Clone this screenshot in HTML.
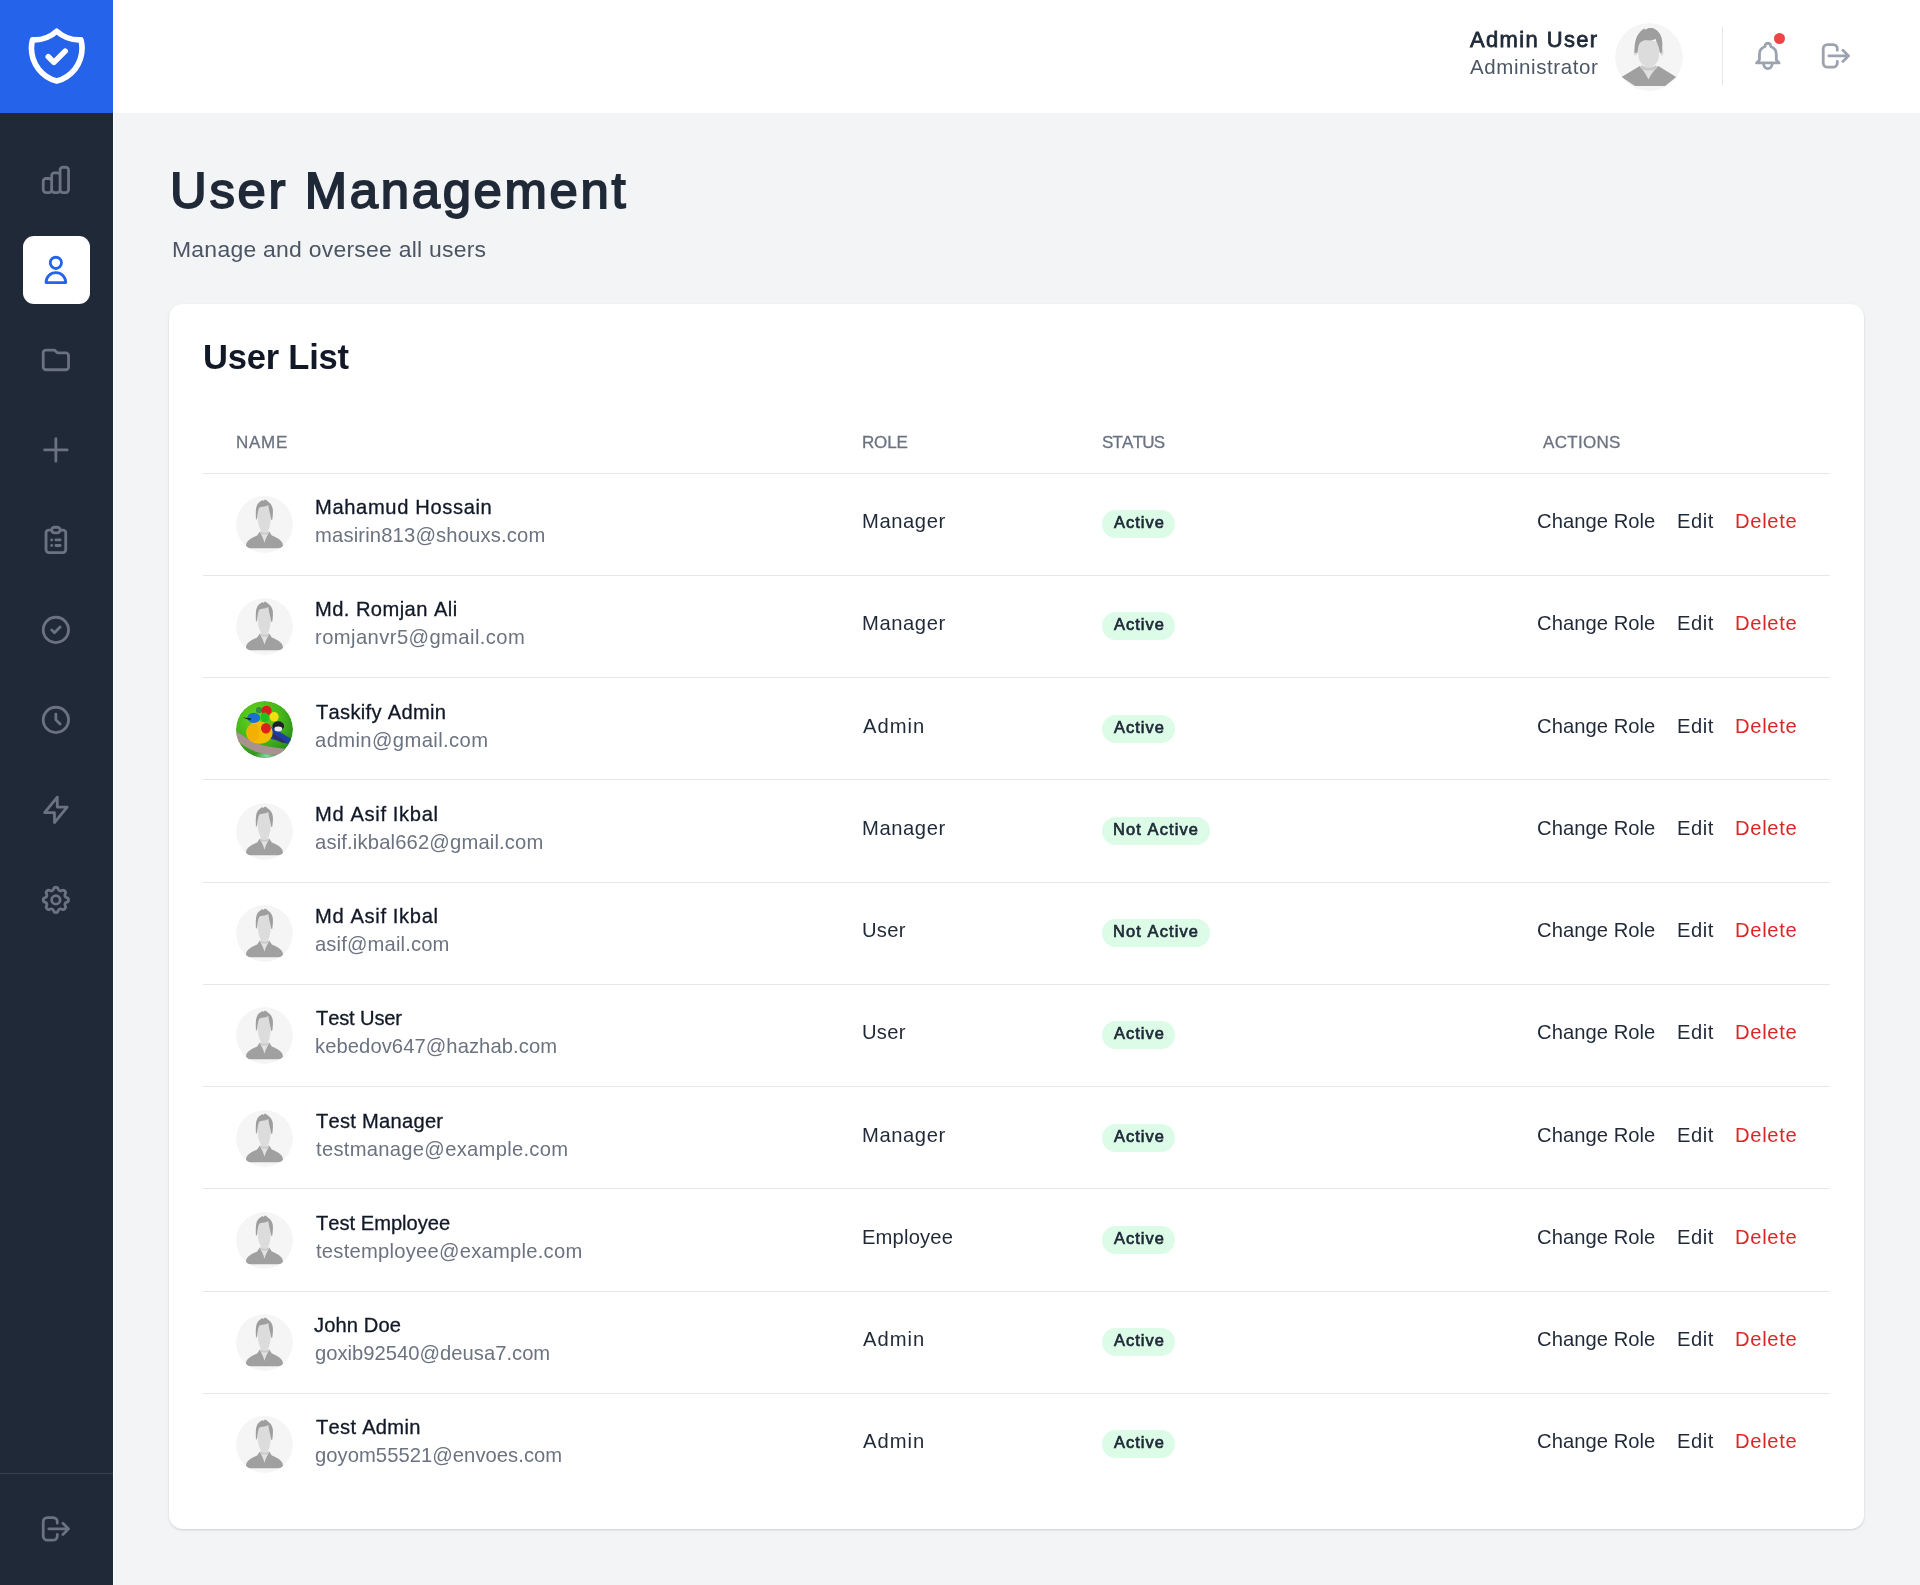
<!DOCTYPE html>
<html><head><meta charset="utf-8"><title>User Management</title>
<style>
*{box-sizing:border-box;margin:0;padding:0}
html,body{width:1920px;height:1585px;overflow:hidden;background:#f3f4f6;font-family:"Liberation Sans",sans-serif;font-kerning:none}
.abs{position:absolute}
#side{position:absolute;left:0;top:0;width:113px;height:1585px;background:#1f2937}
#logo{position:absolute;left:0;top:0;width:113px;height:113px;background:#2563eb}
#vline{position:absolute;left:113px;top:0;width:1px;height:1585px;background:#fff}
#hdr{position:absolute;left:114px;top:0;width:1806px;height:113px;background:#fff}
.ico{position:absolute;fill:none;stroke-linecap:round;stroke-linejoin:round;overflow:visible}
#active{position:absolute;left:23px;top:236px;width:67px;height:68px;background:#fff;border-radius:11px}
#sep{position:absolute;left:0;top:1473px;width:113px;height:1px;background:#374151}
#card{position:absolute;left:169px;top:304px;width:1695px;height:1225px;background:#fff;border-radius:13.5px;box-shadow:0 1px 3px rgba(0,0,0,.1),0 1px 2px rgba(0,0,0,.06)}
.t{position:absolute;white-space:pre;font-feature-settings:"kern" 0;will-change:transform}
.av{position:absolute;border-radius:50%;overflow:hidden}
</style></head><body>
<div id="side"></div><div id="logo"></div><div id="vline"></div><div id="hdr"></div>
<svg class="ico" style="left:22.95px;top:22.90px;width:67.50px;height:67.50px" viewBox="0 0 24 24" stroke="#fff" stroke-width="2"><path d="M9 12l2 2 4-4m5.618-4.016A11.955 11.955 0 0112 2.944a11.955 11.955 0 01-8.618 3.04A12.02 12.02 0 003 9c0 5.591 3.824 10.29 9 11.622 5.176-1.332 9-6.03 9-11.622 0-1.042-.133-2.052-.382-3.016z"/></svg>
<div id="active"></div>
<svg class="ico" style="left:39.12px;top:163.12px;width:33.75px;height:33.75px" viewBox="0 0 24 24" stroke="#6b7280" stroke-width="2"><path d="M9 19v-6a2 2 0 00-2-2H5a2 2 0 00-2 2v6a2 2 0 002 2h2a2 2 0 002-2zm0 0V9a2 2 0 012-2h2a2 2 0 012 2v10m-6 0a2 2 0 002 2h2a2 2 0 002-2m0 0V5a2 2 0 012-2h2a2 2 0 012 2v14a2 2 0 01-2 2h-2a2 2 0 01-2-2z"/></svg>
<svg class="ico" style="left:39.12px;top:253.12px;width:33.75px;height:33.75px" viewBox="0 0 24 24" stroke="#2563eb" stroke-width="2"><path d="M16 7a4 4 0 11-8 0 4 4 0 018 0zM12 14a7 7 0 00-7 7h14a7 7 0 00-7-7z"/></svg>
<svg class="ico" style="left:39.12px;top:343.12px;width:33.75px;height:33.75px" viewBox="0 0 24 24" stroke="#6b7280" stroke-width="2"><path d="M3 7v10a2 2 0 002 2h14a2 2 0 002-2V9a2 2 0 00-2-2h-6l-2-2H5a2 2 0 00-2 2z"/></svg>
<svg class="ico" style="left:39.12px;top:433.12px;width:33.75px;height:33.75px" viewBox="0 0 24 24" stroke="#6b7280" stroke-width="2"><path d="M12 4v16m8-8H4"/></svg>
<svg class="ico" style="left:39.12px;top:523.12px;width:33.75px;height:33.75px" viewBox="0 0 24 24" stroke="#6b7280" stroke-width="2"><path d="M9 5H7a2 2 0 00-2 2v12a2 2 0 002 2h10a2 2 0 002-2V7a2 2 0 00-2-2h-2M9 5a2 2 0 002 2h2a2 2 0 002-2M9 5a2 2 0 012-2h2a2 2 0 012 2m-3 7h3m-3 4h3m-6-4h.01M9 16h.01"/></svg>
<svg class="ico" style="left:39.12px;top:613.12px;width:33.75px;height:33.75px" viewBox="0 0 24 24" stroke="#6b7280" stroke-width="2"><path d="M9 12l2 2 4-4m6 2a9 9 0 11-18 0 9 9 0 0118 0z"/></svg>
<svg class="ico" style="left:39.12px;top:703.12px;width:33.75px;height:33.75px" viewBox="0 0 24 24" stroke="#6b7280" stroke-width="2"><path d="M12 8v4l3 3m6-3a9 9 0 11-18 0 9 9 0 0118 0z"/></svg>
<svg class="ico" style="left:39.12px;top:793.12px;width:33.75px;height:33.75px" viewBox="0 0 24 24" stroke="#6b7280" stroke-width="2"><path d="M13 10V3L4 14h7v7l9-11h-7z"/></svg>
<svg class="ico" style="left:39.12px;top:883.12px;width:33.75px;height:33.75px" viewBox="0 0 24 24" stroke="#6b7280" stroke-width="2"><path d="M10.325 4.317c.426-1.756 2.924-1.756 3.35 0a1.724 1.724 0 002.573 1.066c1.543-.94 3.31.826 2.37 2.37a1.724 1.724 0 001.065 2.572c1.756.426 1.756 2.924 0 3.35a1.724 1.724 0 00-1.066 2.573c.94 1.543-.826 3.31-2.37 2.37a1.724 1.724 0 00-2.572 1.065c-.426 1.756-2.924 1.756-3.35 0a1.724 1.724 0 00-2.573-1.066c-1.543.94-3.31-.826-2.37-2.37a1.724 1.724 0 00-1.065-2.572c-1.756-.426-1.756-2.924 0-3.35a1.724 1.724 0 001.066-2.573c-.94-1.543.826-3.31 2.37-2.37.996.608 2.296.07 2.572-1.065zM15 12a3 3 0 11-6 0 3 3 0 016 0z"/></svg>
<div id="sep"></div>
<svg class="ico" style="left:39.12px;top:1512.12px;width:33.75px;height:33.75px" viewBox="0 0 24 24" stroke="#6b7280" stroke-width="2"><path d="M17 16l4-4m0 0l-4-4m4 4H7m6 4v1a3 3 0 01-3 3H6a3 3 0 01-3-3V7a3 3 0 013-3h4a3 3 0 013 3v1"/></svg>
<div class="t" style="left:1470.26px;top:29.00px;font-size:21.948px;line-height:21.948px;letter-spacing:1.395px;color:#1f2937;-webkit-text-stroke:0.8px #1f2937;">Admin User</div>
<div class="t" style="left:1469.96px;top:57.00px;font-size:20.495px;line-height:20.495px;letter-spacing:0.596px;color:#4b5563;">Administrator</div>
<div class="av" style="left:1615px;top:22.5px;width:68px;height:68px"><svg width="100%" height="100%" viewBox="0 0 56 56"><circle cx="28" cy="28" r="28" fill="#f5f5f5"/><path d="M5.4 44.4 L20.4 35.4 L35.6 35.4 L50.4 44.4 L41.3 51.8 L16.4 51.8 Z" fill="#a0a0a0"/><path d="M20.4 35.4 C23 39 25.5 42 27.6 46.6 C29.5 42 32.5 39 35.6 35.4 Z" fill="#e0e0e0"/><ellipse cx="16.9" cy="23.8" rx="1.4" ry="2.9" fill="#dadada"/><ellipse cx="38.5" cy="23.8" rx="1.4" ry="2.9" fill="#dadada"/><path d="M18.7 20 C18.7 12 36.6 12 36.6 20 L36.2 28 C35.4 33.5 31.2 36.2 27.7 36.2 C24.2 36.2 20.2 33.5 19.4 28 Z" fill="#dcdcdc"/><path d="M22 34.5 C24.5 37.5 31 37.5 33.5 34.5 L35 36.8 C31 40 24.5 40 20.6 36.8 Z" fill="#c9c9c9"/><path d="M16.2 24.5 C15.6 16 17.5 9.5 22.5 5.6 L24.3 4.6 L24.9 5.6 L27.6 4.1 L31 4.1 C36 6.2 39.2 10 39 18 L38.6 24.6 L36.9 24.6 C36.6 20.5 35.2 17.5 34.3 15.8 C33.8 14.6 33.6 13.8 33.4 13 C31.5 14.4 29 14.5 26.5 14.2 C22.5 14 20 15.8 19.2 19.5 C18.8 21.2 18.7 23 18.6 24.6 Z" fill="#9e9e9e"/></svg></div>
<div class="abs" style="left:1722px;top:27px;width:1px;height:58px;background:#e5e7eb"></div>
<svg class="ico" style="left:1751.12px;top:39.33px;width:33.75px;height:33.75px" viewBox="0 0 24 24" stroke="#9ca3af" stroke-width="2"><path d="M15 17h5l-1.405-1.405A2.032 2.032 0 0118 14.158V11a6.002 6.002 0 00-4-5.659V5a2 2 0 10-4 0v.341C7.67 6.165 6 8.388 6 11v3.159c0 .538-.214 1.055-.595 1.436L4 17h5m6 0v1a3 3 0 11-6 0v-1m6 0H9"/></svg>
<div class="abs" style="left:1774px;top:33px;width:11px;height:11px;border-radius:50%;background:#ef4444"></div>
<svg class="ico" style="left:1819.12px;top:38.92px;width:33.75px;height:33.75px" viewBox="0 0 24 24" stroke="#9ca3af" stroke-width="2"><path d="M17 16l4-4m0 0l-4-4m4 4H7m6 4v1a3 3 0 01-3 3H6a3 3 0 01-3-3V7a3 3 0 013-3h4a3 3 0 013 3v1"/></svg>
<div class="t" style="left:169.78px;top:166.00px;font-size:50.873px;line-height:50.873px;letter-spacing:2.658px;color:#1f2937;-webkit-text-stroke:1.8px #1f2937;">User Management</div>
<div class="t" style="left:171.62px;top:238.00px;font-size:22.966px;line-height:22.966px;letter-spacing:0.242px;color:#4b5563;">Manage and oversee all users</div>
<div id="card"></div>
<div class="t" style="left:203.13px;top:340.00px;font-size:34.521px;line-height:34.521px;letter-spacing:-0.204px;font-weight:700;color:#111827;">User List</div>
<div class="t" style="left:236.30px;top:434.00px;font-size:17.006px;line-height:17.006px;letter-spacing:0.731px;color:#6b7280;-webkit-text-stroke:0.3px currentColor;">NAME</div>
<div class="t" style="left:862.00px;top:434.00px;font-size:17.006px;line-height:17.006px;letter-spacing:-0.161px;color:#6b7280;-webkit-text-stroke:0.3px currentColor;">ROLE</div>
<div class="t" style="left:1101.93px;top:434.00px;font-size:17.006px;line-height:17.006px;letter-spacing:-0.807px;color:#6b7280;-webkit-text-stroke:0.3px currentColor;">STATUS</div>
<div class="t" style="left:1543.17px;top:434.00px;font-size:17.006px;line-height:17.006px;letter-spacing:0.304px;color:#6b7280;-webkit-text-stroke:0.3px currentColor;">ACTIONS</div>
<div class="av" style="left:236px;top:496.00px;width:57px;height:57px"><svg width="100%" height="100%" viewBox="0 0 56 56"><circle cx="28" cy="28" r="28" fill="#f5f5f5"/><path d="M9.9 49.3 C9.4 45 13.5 41.8 20.8 38.9 L23.2 35.2 L32.8 35.2 L35.2 38.9 C42.5 41.8 46.6 45 46.1 49.3 Q45 51.4 41.5 51.4 L14.5 51.4 Q11 51.4 9.9 49.3 Z" fill="#a0a0a0"/><path d="M23.2 35.2 C25 38.5 26.8 41.5 28 46 C29.2 41.5 31 38.5 32.8 35.2 Z" fill="#e2e2e2"/><path d="M21.4 13 C21.4 7.5 34.2 7.5 34.2 13 L34.1 23.4 C33.6 28.5 32.8 31.5 32.3 32.5 C31 35 29.5 36.3 27.9 36.3 C26 36.3 24.8 35 23.9 32.8 C22.6 30 21.8 27 21.4 23.9 Z" fill="#dcdcdc"/><path d="M24 35.2 C25.5 36.6 30.5 36.6 32 35.2 L32.6 36.6 C30 38.2 26 38.2 23.4 36.6 Z" fill="#c8c8c8"/><path d="M19.65 23.9 C19.3 18 19.4 14 19.9 11.4 C20.6 8.5 22 6.5 23.9 5.5 L25.9 4.0 L26.9 5.0 L28.4 3.5 C29.5 3.8 30.4 4.5 31.3 5.5 C33 6.8 34.5 8.2 35.3 9.95 C36 11.5 36.3 13 36.3 14.9 C36.3 18 36 21 35.6 23.4 L34.6 23.4 C34 20 33.4 17 32.8 14.9 C32.4 13 32 11 31.8 9.0 C30.8 9.5 29.9 9.8 28.9 9.95 C27 10.2 25 10.4 23.9 10.9 C22.9 11.6 22.2 12.6 21.9 13.9 C21.3 16.5 21 19 20.9 21.4 Z" fill="#9e9e9e"/></svg></div>
<div class="t" style="left:314.65px;top:497.00px;font-size:20.131px;line-height:20.131px;letter-spacing:0.644px;color:#111827;-webkit-text-stroke:0.3px currentColor;">Mahamud Hossain</div>
<div class="t" style="left:314.66px;top:525.00px;font-size:20.204px;line-height:20.204px;letter-spacing:0.167px;color:#6b7280;">masirin813@shouxs.com</div>
<div class="t" style="left:862.44px;top:511.00px;font-size:20.204px;line-height:20.204px;letter-spacing:0.592px;color:#1f2937;">Manager</div>
<div class="abs" style="left:1102px;top:510.00px;width:73.1px;height:28px;border-radius:14px;background:#dcfce7"></div>
<div class="t" style="left:1113.52px;top:514.00px;font-size:16.425px;line-height:16.425px;letter-spacing:1.027px;color:#1f2937;-webkit-text-stroke:0.7px #1f2937;">Active</div>
<div class="t" style="left:1536.97px;top:511.00px;font-size:20.204px;line-height:20.204px;letter-spacing:0.049px;color:#1f2937;">Change Role</div>
<div class="t" style="left:1676.54px;top:511.00px;font-size:20.204px;line-height:20.204px;letter-spacing:0.564px;color:#1f2937;">Edit</div>
<div class="t" style="left:1734.54px;top:511.00px;font-size:20.204px;line-height:20.204px;letter-spacing:0.671px;color:#dc2626;">Delete</div>
<div class="abs" style="left:203px;top:575px;width:1627px;height:1px;background:#e5e7eb"></div>
<div class="av" style="left:236px;top:598.00px;width:57px;height:57px"><svg width="100%" height="100%" viewBox="0 0 56 56"><circle cx="28" cy="28" r="28" fill="#f5f5f5"/><path d="M9.9 49.3 C9.4 45 13.5 41.8 20.8 38.9 L23.2 35.2 L32.8 35.2 L35.2 38.9 C42.5 41.8 46.6 45 46.1 49.3 Q45 51.4 41.5 51.4 L14.5 51.4 Q11 51.4 9.9 49.3 Z" fill="#a0a0a0"/><path d="M23.2 35.2 C25 38.5 26.8 41.5 28 46 C29.2 41.5 31 38.5 32.8 35.2 Z" fill="#e2e2e2"/><path d="M21.4 13 C21.4 7.5 34.2 7.5 34.2 13 L34.1 23.4 C33.6 28.5 32.8 31.5 32.3 32.5 C31 35 29.5 36.3 27.9 36.3 C26 36.3 24.8 35 23.9 32.8 C22.6 30 21.8 27 21.4 23.9 Z" fill="#dcdcdc"/><path d="M24 35.2 C25.5 36.6 30.5 36.6 32 35.2 L32.6 36.6 C30 38.2 26 38.2 23.4 36.6 Z" fill="#c8c8c8"/><path d="M19.65 23.9 C19.3 18 19.4 14 19.9 11.4 C20.6 8.5 22 6.5 23.9 5.5 L25.9 4.0 L26.9 5.0 L28.4 3.5 C29.5 3.8 30.4 4.5 31.3 5.5 C33 6.8 34.5 8.2 35.3 9.95 C36 11.5 36.3 13 36.3 14.9 C36.3 18 36 21 35.6 23.4 L34.6 23.4 C34 20 33.4 17 32.8 14.9 C32.4 13 32 11 31.8 9.0 C30.8 9.5 29.9 9.8 28.9 9.95 C27 10.2 25 10.4 23.9 10.9 C22.9 11.6 22.2 12.6 21.9 13.9 C21.3 16.5 21 19 20.9 21.4 Z" fill="#9e9e9e"/></svg></div>
<div class="t" style="left:314.65px;top:599.00px;font-size:20.131px;line-height:20.131px;letter-spacing:0.440px;color:#111827;-webkit-text-stroke:0.3px currentColor;">Md. Romjan Ali</div>
<div class="t" style="left:314.66px;top:627.00px;font-size:20.204px;line-height:20.204px;letter-spacing:0.421px;color:#6b7280;">romjanvr5@gmail.com</div>
<div class="t" style="left:862.44px;top:613.00px;font-size:20.204px;line-height:20.204px;letter-spacing:0.592px;color:#1f2937;">Manager</div>
<div class="abs" style="left:1102px;top:612.00px;width:73.1px;height:28px;border-radius:14px;background:#dcfce7"></div>
<div class="t" style="left:1113.52px;top:616.00px;font-size:16.425px;line-height:16.425px;letter-spacing:1.027px;color:#1f2937;-webkit-text-stroke:0.7px #1f2937;">Active</div>
<div class="t" style="left:1536.97px;top:613.00px;font-size:20.204px;line-height:20.204px;letter-spacing:0.049px;color:#1f2937;">Change Role</div>
<div class="t" style="left:1676.54px;top:613.00px;font-size:20.204px;line-height:20.204px;letter-spacing:0.564px;color:#1f2937;">Edit</div>
<div class="t" style="left:1734.54px;top:613.00px;font-size:20.204px;line-height:20.204px;letter-spacing:0.671px;color:#dc2626;">Delete</div>
<div class="abs" style="left:203px;top:677px;width:1627px;height:1px;background:#e5e7eb"></div>
<div class="av" style="left:236px;top:701.00px;width:57px;height:57px"><svg width="100%" height="100%" viewBox="0 0 56 56"><defs><radialGradient id="bg" cx="0.38" cy="0.3" r="0.8"><stop offset="0" stop-color="#66d81c"/><stop offset="0.55" stop-color="#44b41a"/><stop offset="1" stop-color="#23801e"/></radialGradient><radialGradient id="bg2" cx="0.5" cy="0.5" r="0.5"><stop offset="0" stop-color="#8fdcb0"/><stop offset="1" stop-color="#8fdcb0" stop-opacity="0"/></radialGradient></defs><circle cx="28" cy="28" r="28" fill="url(#bg)"/><ellipse cx="30" cy="54" rx="12" ry="5" fill="url(#bg2)"/><path d="M0 30 C6 33 13 39 21 42 C30 45 40 46 48 47 L46 52 C38 54 28 52 20 50 C12 47 5 42 0 39 Z" fill="#a8928f"/><path d="M25 21 C34 24 44 31 54 37 L51 42 C43 40 35 37 27 35 Z" fill="#1e3ea6"/><path d="M32 30 C38 33 44 36 50 41 L45 41 C40 38 36 35 31 33 Z" fill="#3a2a2a" opacity="0.6"/><ellipse cx="23" cy="31" rx="13" ry="11" fill="#f4bd00"/><ellipse cx="17" cy="31" rx="6" ry="9" fill="#f0a800" opacity="0.6"/><ellipse cx="17.5" cy="16.5" rx="6.3" ry="5" fill="#1a6fd8"/><path d="M6.5 16.2 L15 17 L14 19 Z" fill="#1a1a1a"/><circle cx="22.5" cy="9" r="3" fill="#2f8f3a"/><ellipse cx="30" cy="9.5" rx="5" ry="4.8" fill="#d8211e"/><ellipse cx="28.2" cy="16.2" rx="4.2" ry="5" fill="#22c21e"/><ellipse cx="37.5" cy="15.5" rx="4.5" ry="4.7" fill="#f2e010"/><ellipse cx="29.4" cy="26.8" rx="4.8" ry="5.2" fill="#dc201e"/><ellipse cx="41.5" cy="24.5" rx="5.8" ry="4.6" fill="#20202c"/><ellipse cx="41.5" cy="27.5" rx="3.8" ry="2.4" fill="#ececec"/></svg></div>
<div class="t" style="left:315.85px;top:702.00px;font-size:20.131px;line-height:20.131px;letter-spacing:0.296px;color:#111827;-webkit-text-stroke:0.3px currentColor;">Taskify Admin</div>
<div class="t" style="left:315.14px;top:730.00px;font-size:20.204px;line-height:20.204px;letter-spacing:0.399px;color:#6b7280;">admin@gmail.com</div>
<div class="t" style="left:862.56px;top:716.00px;font-size:20.204px;line-height:20.204px;letter-spacing:0.971px;color:#1f2937;">Admin</div>
<div class="abs" style="left:1102px;top:715.00px;width:73.1px;height:28px;border-radius:14px;background:#dcfce7"></div>
<div class="t" style="left:1113.52px;top:719.00px;font-size:16.425px;line-height:16.425px;letter-spacing:1.027px;color:#1f2937;-webkit-text-stroke:0.7px #1f2937;">Active</div>
<div class="t" style="left:1536.97px;top:716.00px;font-size:20.204px;line-height:20.204px;letter-spacing:0.049px;color:#1f2937;">Change Role</div>
<div class="t" style="left:1676.54px;top:716.00px;font-size:20.204px;line-height:20.204px;letter-spacing:0.564px;color:#1f2937;">Edit</div>
<div class="t" style="left:1734.54px;top:716.00px;font-size:20.204px;line-height:20.204px;letter-spacing:0.671px;color:#dc2626;">Delete</div>
<div class="abs" style="left:203px;top:779px;width:1627px;height:1px;background:#e5e7eb"></div>
<div class="av" style="left:236px;top:803.00px;width:57px;height:57px"><svg width="100%" height="100%" viewBox="0 0 56 56"><circle cx="28" cy="28" r="28" fill="#f5f5f5"/><path d="M9.9 49.3 C9.4 45 13.5 41.8 20.8 38.9 L23.2 35.2 L32.8 35.2 L35.2 38.9 C42.5 41.8 46.6 45 46.1 49.3 Q45 51.4 41.5 51.4 L14.5 51.4 Q11 51.4 9.9 49.3 Z" fill="#a0a0a0"/><path d="M23.2 35.2 C25 38.5 26.8 41.5 28 46 C29.2 41.5 31 38.5 32.8 35.2 Z" fill="#e2e2e2"/><path d="M21.4 13 C21.4 7.5 34.2 7.5 34.2 13 L34.1 23.4 C33.6 28.5 32.8 31.5 32.3 32.5 C31 35 29.5 36.3 27.9 36.3 C26 36.3 24.8 35 23.9 32.8 C22.6 30 21.8 27 21.4 23.9 Z" fill="#dcdcdc"/><path d="M24 35.2 C25.5 36.6 30.5 36.6 32 35.2 L32.6 36.6 C30 38.2 26 38.2 23.4 36.6 Z" fill="#c8c8c8"/><path d="M19.65 23.9 C19.3 18 19.4 14 19.9 11.4 C20.6 8.5 22 6.5 23.9 5.5 L25.9 4.0 L26.9 5.0 L28.4 3.5 C29.5 3.8 30.4 4.5 31.3 5.5 C33 6.8 34.5 8.2 35.3 9.95 C36 11.5 36.3 13 36.3 14.9 C36.3 18 36 21 35.6 23.4 L34.6 23.4 C34 20 33.4 17 32.8 14.9 C32.4 13 32 11 31.8 9.0 C30.8 9.5 29.9 9.8 28.9 9.95 C27 10.2 25 10.4 23.9 10.9 C22.9 11.6 22.2 12.6 21.9 13.9 C21.3 16.5 21 19 20.9 21.4 Z" fill="#9e9e9e"/></svg></div>
<div class="t" style="left:314.65px;top:804.00px;font-size:20.131px;line-height:20.131px;letter-spacing:0.647px;color:#111827;-webkit-text-stroke:0.3px currentColor;">Md Asif Ikbal</div>
<div class="t" style="left:315.14px;top:832.00px;font-size:20.204px;line-height:20.204px;letter-spacing:0.164px;color:#6b7280;">asif.ikbal662@gmail.com</div>
<div class="t" style="left:862.44px;top:818.00px;font-size:20.204px;line-height:20.204px;letter-spacing:0.592px;color:#1f2937;">Manager</div>
<div class="abs" style="left:1102px;top:817.00px;width:108.0px;height:28px;border-radius:14px;background:#dcfce7"></div>
<div class="t" style="left:1113.40px;top:821.00px;font-size:16.425px;line-height:16.425px;letter-spacing:1.125px;color:#1f2937;-webkit-text-stroke:0.7px #1f2937;">Not Active</div>
<div class="t" style="left:1536.97px;top:818.00px;font-size:20.204px;line-height:20.204px;letter-spacing:0.049px;color:#1f2937;">Change Role</div>
<div class="t" style="left:1676.54px;top:818.00px;font-size:20.204px;line-height:20.204px;letter-spacing:0.564px;color:#1f2937;">Edit</div>
<div class="t" style="left:1734.54px;top:818.00px;font-size:20.204px;line-height:20.204px;letter-spacing:0.671px;color:#dc2626;">Delete</div>
<div class="abs" style="left:203px;top:882px;width:1627px;height:1px;background:#e5e7eb"></div>
<div class="av" style="left:236px;top:905.00px;width:57px;height:57px"><svg width="100%" height="100%" viewBox="0 0 56 56"><circle cx="28" cy="28" r="28" fill="#f5f5f5"/><path d="M9.9 49.3 C9.4 45 13.5 41.8 20.8 38.9 L23.2 35.2 L32.8 35.2 L35.2 38.9 C42.5 41.8 46.6 45 46.1 49.3 Q45 51.4 41.5 51.4 L14.5 51.4 Q11 51.4 9.9 49.3 Z" fill="#a0a0a0"/><path d="M23.2 35.2 C25 38.5 26.8 41.5 28 46 C29.2 41.5 31 38.5 32.8 35.2 Z" fill="#e2e2e2"/><path d="M21.4 13 C21.4 7.5 34.2 7.5 34.2 13 L34.1 23.4 C33.6 28.5 32.8 31.5 32.3 32.5 C31 35 29.5 36.3 27.9 36.3 C26 36.3 24.8 35 23.9 32.8 C22.6 30 21.8 27 21.4 23.9 Z" fill="#dcdcdc"/><path d="M24 35.2 C25.5 36.6 30.5 36.6 32 35.2 L32.6 36.6 C30 38.2 26 38.2 23.4 36.6 Z" fill="#c8c8c8"/><path d="M19.65 23.9 C19.3 18 19.4 14 19.9 11.4 C20.6 8.5 22 6.5 23.9 5.5 L25.9 4.0 L26.9 5.0 L28.4 3.5 C29.5 3.8 30.4 4.5 31.3 5.5 C33 6.8 34.5 8.2 35.3 9.95 C36 11.5 36.3 13 36.3 14.9 C36.3 18 36 21 35.6 23.4 L34.6 23.4 C34 20 33.4 17 32.8 14.9 C32.4 13 32 11 31.8 9.0 C30.8 9.5 29.9 9.8 28.9 9.95 C27 10.2 25 10.4 23.9 10.9 C22.9 11.6 22.2 12.6 21.9 13.9 C21.3 16.5 21 19 20.9 21.4 Z" fill="#9e9e9e"/></svg></div>
<div class="t" style="left:314.65px;top:906.00px;font-size:20.131px;line-height:20.131px;letter-spacing:0.647px;color:#111827;-webkit-text-stroke:0.3px currentColor;">Md Asif Ikbal</div>
<div class="t" style="left:315.14px;top:934.00px;font-size:20.204px;line-height:20.204px;letter-spacing:0.143px;color:#6b7280;">asif@mail.com</div>
<div class="t" style="left:862.44px;top:920.00px;font-size:20.204px;line-height:20.204px;letter-spacing:0.246px;color:#1f2937;">User</div>
<div class="abs" style="left:1102px;top:919.00px;width:108.0px;height:28px;border-radius:14px;background:#dcfce7"></div>
<div class="t" style="left:1113.40px;top:923.00px;font-size:16.425px;line-height:16.425px;letter-spacing:1.125px;color:#1f2937;-webkit-text-stroke:0.7px #1f2937;">Not Active</div>
<div class="t" style="left:1536.97px;top:920.00px;font-size:20.204px;line-height:20.204px;letter-spacing:0.049px;color:#1f2937;">Change Role</div>
<div class="t" style="left:1676.54px;top:920.00px;font-size:20.204px;line-height:20.204px;letter-spacing:0.564px;color:#1f2937;">Edit</div>
<div class="t" style="left:1734.54px;top:920.00px;font-size:20.204px;line-height:20.204px;letter-spacing:0.671px;color:#dc2626;">Delete</div>
<div class="abs" style="left:203px;top:984px;width:1627px;height:1px;background:#e5e7eb"></div>
<div class="av" style="left:236px;top:1007.00px;width:57px;height:57px"><svg width="100%" height="100%" viewBox="0 0 56 56"><circle cx="28" cy="28" r="28" fill="#f5f5f5"/><path d="M9.9 49.3 C9.4 45 13.5 41.8 20.8 38.9 L23.2 35.2 L32.8 35.2 L35.2 38.9 C42.5 41.8 46.6 45 46.1 49.3 Q45 51.4 41.5 51.4 L14.5 51.4 Q11 51.4 9.9 49.3 Z" fill="#a0a0a0"/><path d="M23.2 35.2 C25 38.5 26.8 41.5 28 46 C29.2 41.5 31 38.5 32.8 35.2 Z" fill="#e2e2e2"/><path d="M21.4 13 C21.4 7.5 34.2 7.5 34.2 13 L34.1 23.4 C33.6 28.5 32.8 31.5 32.3 32.5 C31 35 29.5 36.3 27.9 36.3 C26 36.3 24.8 35 23.9 32.8 C22.6 30 21.8 27 21.4 23.9 Z" fill="#dcdcdc"/><path d="M24 35.2 C25.5 36.6 30.5 36.6 32 35.2 L32.6 36.6 C30 38.2 26 38.2 23.4 36.6 Z" fill="#c8c8c8"/><path d="M19.65 23.9 C19.3 18 19.4 14 19.9 11.4 C20.6 8.5 22 6.5 23.9 5.5 L25.9 4.0 L26.9 5.0 L28.4 3.5 C29.5 3.8 30.4 4.5 31.3 5.5 C33 6.8 34.5 8.2 35.3 9.95 C36 11.5 36.3 13 36.3 14.9 C36.3 18 36 21 35.6 23.4 L34.6 23.4 C34 20 33.4 17 32.8 14.9 C32.4 13 32 11 31.8 9.0 C30.8 9.5 29.9 9.8 28.9 9.95 C27 10.2 25 10.4 23.9 10.9 C22.9 11.6 22.2 12.6 21.9 13.9 C21.3 16.5 21 19 20.9 21.4 Z" fill="#9e9e9e"/></svg></div>
<div class="t" style="left:315.85px;top:1008.00px;font-size:20.131px;line-height:20.131px;letter-spacing:-0.145px;color:#111827;-webkit-text-stroke:0.3px currentColor;">Test User</div>
<div class="t" style="left:314.64px;top:1036.00px;font-size:20.204px;line-height:20.204px;letter-spacing:0.076px;color:#6b7280;">kebedov647@hazhab.com</div>
<div class="t" style="left:862.44px;top:1022.00px;font-size:20.204px;line-height:20.204px;letter-spacing:0.246px;color:#1f2937;">User</div>
<div class="abs" style="left:1102px;top:1021.00px;width:73.1px;height:28px;border-radius:14px;background:#dcfce7"></div>
<div class="t" style="left:1113.52px;top:1025.00px;font-size:16.425px;line-height:16.425px;letter-spacing:1.027px;color:#1f2937;-webkit-text-stroke:0.7px #1f2937;">Active</div>
<div class="t" style="left:1536.97px;top:1022.00px;font-size:20.204px;line-height:20.204px;letter-spacing:0.049px;color:#1f2937;">Change Role</div>
<div class="t" style="left:1676.54px;top:1022.00px;font-size:20.204px;line-height:20.204px;letter-spacing:0.564px;color:#1f2937;">Edit</div>
<div class="t" style="left:1734.54px;top:1022.00px;font-size:20.204px;line-height:20.204px;letter-spacing:0.671px;color:#dc2626;">Delete</div>
<div class="abs" style="left:203px;top:1086px;width:1627px;height:1px;background:#e5e7eb"></div>
<div class="av" style="left:236px;top:1110.00px;width:57px;height:57px"><svg width="100%" height="100%" viewBox="0 0 56 56"><circle cx="28" cy="28" r="28" fill="#f5f5f5"/><path d="M9.9 49.3 C9.4 45 13.5 41.8 20.8 38.9 L23.2 35.2 L32.8 35.2 L35.2 38.9 C42.5 41.8 46.6 45 46.1 49.3 Q45 51.4 41.5 51.4 L14.5 51.4 Q11 51.4 9.9 49.3 Z" fill="#a0a0a0"/><path d="M23.2 35.2 C25 38.5 26.8 41.5 28 46 C29.2 41.5 31 38.5 32.8 35.2 Z" fill="#e2e2e2"/><path d="M21.4 13 C21.4 7.5 34.2 7.5 34.2 13 L34.1 23.4 C33.6 28.5 32.8 31.5 32.3 32.5 C31 35 29.5 36.3 27.9 36.3 C26 36.3 24.8 35 23.9 32.8 C22.6 30 21.8 27 21.4 23.9 Z" fill="#dcdcdc"/><path d="M24 35.2 C25.5 36.6 30.5 36.6 32 35.2 L32.6 36.6 C30 38.2 26 38.2 23.4 36.6 Z" fill="#c8c8c8"/><path d="M19.65 23.9 C19.3 18 19.4 14 19.9 11.4 C20.6 8.5 22 6.5 23.9 5.5 L25.9 4.0 L26.9 5.0 L28.4 3.5 C29.5 3.8 30.4 4.5 31.3 5.5 C33 6.8 34.5 8.2 35.3 9.95 C36 11.5 36.3 13 36.3 14.9 C36.3 18 36 21 35.6 23.4 L34.6 23.4 C34 20 33.4 17 32.8 14.9 C32.4 13 32 11 31.8 9.0 C30.8 9.5 29.9 9.8 28.9 9.95 C27 10.2 25 10.4 23.9 10.9 C22.9 11.6 22.2 12.6 21.9 13.9 C21.3 16.5 21 19 20.9 21.4 Z" fill="#9e9e9e"/></svg></div>
<div class="t" style="left:315.85px;top:1111.00px;font-size:20.131px;line-height:20.131px;letter-spacing:0.263px;color:#111827;-webkit-text-stroke:0.3px currentColor;">Test Manager</div>
<div class="t" style="left:315.69px;top:1139.00px;font-size:20.204px;line-height:20.204px;letter-spacing:0.286px;color:#6b7280;">testmanage@example.com</div>
<div class="t" style="left:862.44px;top:1125.00px;font-size:20.204px;line-height:20.204px;letter-spacing:0.592px;color:#1f2937;">Manager</div>
<div class="abs" style="left:1102px;top:1124.00px;width:73.1px;height:28px;border-radius:14px;background:#dcfce7"></div>
<div class="t" style="left:1113.52px;top:1128.00px;font-size:16.425px;line-height:16.425px;letter-spacing:1.027px;color:#1f2937;-webkit-text-stroke:0.7px #1f2937;">Active</div>
<div class="t" style="left:1536.97px;top:1125.00px;font-size:20.204px;line-height:20.204px;letter-spacing:0.049px;color:#1f2937;">Change Role</div>
<div class="t" style="left:1676.54px;top:1125.00px;font-size:20.204px;line-height:20.204px;letter-spacing:0.564px;color:#1f2937;">Edit</div>
<div class="t" style="left:1734.54px;top:1125.00px;font-size:20.204px;line-height:20.204px;letter-spacing:0.671px;color:#dc2626;">Delete</div>
<div class="abs" style="left:203px;top:1188px;width:1627px;height:1px;background:#e5e7eb"></div>
<div class="av" style="left:236px;top:1212.00px;width:57px;height:57px"><svg width="100%" height="100%" viewBox="0 0 56 56"><circle cx="28" cy="28" r="28" fill="#f5f5f5"/><path d="M9.9 49.3 C9.4 45 13.5 41.8 20.8 38.9 L23.2 35.2 L32.8 35.2 L35.2 38.9 C42.5 41.8 46.6 45 46.1 49.3 Q45 51.4 41.5 51.4 L14.5 51.4 Q11 51.4 9.9 49.3 Z" fill="#a0a0a0"/><path d="M23.2 35.2 C25 38.5 26.8 41.5 28 46 C29.2 41.5 31 38.5 32.8 35.2 Z" fill="#e2e2e2"/><path d="M21.4 13 C21.4 7.5 34.2 7.5 34.2 13 L34.1 23.4 C33.6 28.5 32.8 31.5 32.3 32.5 C31 35 29.5 36.3 27.9 36.3 C26 36.3 24.8 35 23.9 32.8 C22.6 30 21.8 27 21.4 23.9 Z" fill="#dcdcdc"/><path d="M24 35.2 C25.5 36.6 30.5 36.6 32 35.2 L32.6 36.6 C30 38.2 26 38.2 23.4 36.6 Z" fill="#c8c8c8"/><path d="M19.65 23.9 C19.3 18 19.4 14 19.9 11.4 C20.6 8.5 22 6.5 23.9 5.5 L25.9 4.0 L26.9 5.0 L28.4 3.5 C29.5 3.8 30.4 4.5 31.3 5.5 C33 6.8 34.5 8.2 35.3 9.95 C36 11.5 36.3 13 36.3 14.9 C36.3 18 36 21 35.6 23.4 L34.6 23.4 C34 20 33.4 17 32.8 14.9 C32.4 13 32 11 31.8 9.0 C30.8 9.5 29.9 9.8 28.9 9.95 C27 10.2 25 10.4 23.9 10.9 C22.9 11.6 22.2 12.6 21.9 13.9 C21.3 16.5 21 19 20.9 21.4 Z" fill="#9e9e9e"/></svg></div>
<div class="t" style="left:315.85px;top:1213.00px;font-size:20.131px;line-height:20.131px;letter-spacing:-0.001px;color:#111827;-webkit-text-stroke:0.3px currentColor;">Test Employee</div>
<div class="t" style="left:315.69px;top:1241.00px;font-size:20.204px;line-height:20.204px;letter-spacing:0.244px;color:#6b7280;">testemployee@example.com</div>
<div class="t" style="left:862.44px;top:1227.00px;font-size:20.204px;line-height:20.204px;letter-spacing:0.159px;color:#1f2937;">Employee</div>
<div class="abs" style="left:1102px;top:1226.00px;width:73.1px;height:28px;border-radius:14px;background:#dcfce7"></div>
<div class="t" style="left:1113.52px;top:1230.00px;font-size:16.425px;line-height:16.425px;letter-spacing:1.027px;color:#1f2937;-webkit-text-stroke:0.7px #1f2937;">Active</div>
<div class="t" style="left:1536.97px;top:1227.00px;font-size:20.204px;line-height:20.204px;letter-spacing:0.049px;color:#1f2937;">Change Role</div>
<div class="t" style="left:1676.54px;top:1227.00px;font-size:20.204px;line-height:20.204px;letter-spacing:0.564px;color:#1f2937;">Edit</div>
<div class="t" style="left:1734.54px;top:1227.00px;font-size:20.204px;line-height:20.204px;letter-spacing:0.671px;color:#dc2626;">Delete</div>
<div class="abs" style="left:203px;top:1291px;width:1627px;height:1px;background:#e5e7eb"></div>
<div class="av" style="left:236px;top:1314.00px;width:57px;height:57px"><svg width="100%" height="100%" viewBox="0 0 56 56"><circle cx="28" cy="28" r="28" fill="#f5f5f5"/><path d="M9.9 49.3 C9.4 45 13.5 41.8 20.8 38.9 L23.2 35.2 L32.8 35.2 L35.2 38.9 C42.5 41.8 46.6 45 46.1 49.3 Q45 51.4 41.5 51.4 L14.5 51.4 Q11 51.4 9.9 49.3 Z" fill="#a0a0a0"/><path d="M23.2 35.2 C25 38.5 26.8 41.5 28 46 C29.2 41.5 31 38.5 32.8 35.2 Z" fill="#e2e2e2"/><path d="M21.4 13 C21.4 7.5 34.2 7.5 34.2 13 L34.1 23.4 C33.6 28.5 32.8 31.5 32.3 32.5 C31 35 29.5 36.3 27.9 36.3 C26 36.3 24.8 35 23.9 32.8 C22.6 30 21.8 27 21.4 23.9 Z" fill="#dcdcdc"/><path d="M24 35.2 C25.5 36.6 30.5 36.6 32 35.2 L32.6 36.6 C30 38.2 26 38.2 23.4 36.6 Z" fill="#c8c8c8"/><path d="M19.65 23.9 C19.3 18 19.4 14 19.9 11.4 C20.6 8.5 22 6.5 23.9 5.5 L25.9 4.0 L26.9 5.0 L28.4 3.5 C29.5 3.8 30.4 4.5 31.3 5.5 C33 6.8 34.5 8.2 35.3 9.95 C36 11.5 36.3 13 36.3 14.9 C36.3 18 36 21 35.6 23.4 L34.6 23.4 C34 20 33.4 17 32.8 14.9 C32.4 13 32 11 31.8 9.0 C30.8 9.5 29.9 9.8 28.9 9.95 C27 10.2 25 10.4 23.9 10.9 C22.9 11.6 22.2 12.6 21.9 13.9 C21.3 16.5 21 19 20.9 21.4 Z" fill="#9e9e9e"/></svg></div>
<div class="t" style="left:313.89px;top:1315.00px;font-size:20.131px;line-height:20.131px;letter-spacing:0.119px;color:#111827;-webkit-text-stroke:0.3px currentColor;">John Doe</div>
<div class="t" style="left:315.15px;top:1343.00px;font-size:20.204px;line-height:20.204px;letter-spacing:0.016px;color:#6b7280;">goxib92540@deusa7.com</div>
<div class="t" style="left:862.56px;top:1329.00px;font-size:20.204px;line-height:20.204px;letter-spacing:0.971px;color:#1f2937;">Admin</div>
<div class="abs" style="left:1102px;top:1328.00px;width:73.1px;height:28px;border-radius:14px;background:#dcfce7"></div>
<div class="t" style="left:1113.52px;top:1332.00px;font-size:16.425px;line-height:16.425px;letter-spacing:1.027px;color:#1f2937;-webkit-text-stroke:0.7px #1f2937;">Active</div>
<div class="t" style="left:1536.97px;top:1329.00px;font-size:20.204px;line-height:20.204px;letter-spacing:0.049px;color:#1f2937;">Change Role</div>
<div class="t" style="left:1676.54px;top:1329.00px;font-size:20.204px;line-height:20.204px;letter-spacing:0.564px;color:#1f2937;">Edit</div>
<div class="t" style="left:1734.54px;top:1329.00px;font-size:20.204px;line-height:20.204px;letter-spacing:0.671px;color:#dc2626;">Delete</div>
<div class="abs" style="left:203px;top:1393px;width:1627px;height:1px;background:#e5e7eb"></div>
<div class="av" style="left:236px;top:1416.00px;width:57px;height:57px"><svg width="100%" height="100%" viewBox="0 0 56 56"><circle cx="28" cy="28" r="28" fill="#f5f5f5"/><path d="M9.9 49.3 C9.4 45 13.5 41.8 20.8 38.9 L23.2 35.2 L32.8 35.2 L35.2 38.9 C42.5 41.8 46.6 45 46.1 49.3 Q45 51.4 41.5 51.4 L14.5 51.4 Q11 51.4 9.9 49.3 Z" fill="#a0a0a0"/><path d="M23.2 35.2 C25 38.5 26.8 41.5 28 46 C29.2 41.5 31 38.5 32.8 35.2 Z" fill="#e2e2e2"/><path d="M21.4 13 C21.4 7.5 34.2 7.5 34.2 13 L34.1 23.4 C33.6 28.5 32.8 31.5 32.3 32.5 C31 35 29.5 36.3 27.9 36.3 C26 36.3 24.8 35 23.9 32.8 C22.6 30 21.8 27 21.4 23.9 Z" fill="#dcdcdc"/><path d="M24 35.2 C25.5 36.6 30.5 36.6 32 35.2 L32.6 36.6 C30 38.2 26 38.2 23.4 36.6 Z" fill="#c8c8c8"/><path d="M19.65 23.9 C19.3 18 19.4 14 19.9 11.4 C20.6 8.5 22 6.5 23.9 5.5 L25.9 4.0 L26.9 5.0 L28.4 3.5 C29.5 3.8 30.4 4.5 31.3 5.5 C33 6.8 34.5 8.2 35.3 9.95 C36 11.5 36.3 13 36.3 14.9 C36.3 18 36 21 35.6 23.4 L34.6 23.4 C34 20 33.4 17 32.8 14.9 C32.4 13 32 11 31.8 9.0 C30.8 9.5 29.9 9.8 28.9 9.95 C27 10.2 25 10.4 23.9 10.9 C22.9 11.6 22.2 12.6 21.9 13.9 C21.3 16.5 21 19 20.9 21.4 Z" fill="#9e9e9e"/></svg></div>
<div class="t" style="left:315.85px;top:1417.00px;font-size:20.131px;line-height:20.131px;letter-spacing:0.284px;color:#111827;-webkit-text-stroke:0.3px currentColor;">Test Admin</div>
<div class="t" style="left:315.15px;top:1445.00px;font-size:20.204px;line-height:20.204px;letter-spacing:0.056px;color:#6b7280;">goyom55521@envoes.com</div>
<div class="t" style="left:862.56px;top:1431.00px;font-size:20.204px;line-height:20.204px;letter-spacing:0.971px;color:#1f2937;">Admin</div>
<div class="abs" style="left:1102px;top:1430.00px;width:73.1px;height:28px;border-radius:14px;background:#dcfce7"></div>
<div class="t" style="left:1113.52px;top:1434.00px;font-size:16.425px;line-height:16.425px;letter-spacing:1.027px;color:#1f2937;-webkit-text-stroke:0.7px #1f2937;">Active</div>
<div class="t" style="left:1536.97px;top:1431.00px;font-size:20.204px;line-height:20.204px;letter-spacing:0.049px;color:#1f2937;">Change Role</div>
<div class="t" style="left:1676.54px;top:1431.00px;font-size:20.204px;line-height:20.204px;letter-spacing:0.564px;color:#1f2937;">Edit</div>
<div class="t" style="left:1734.54px;top:1431.00px;font-size:20.204px;line-height:20.204px;letter-spacing:0.671px;color:#dc2626;">Delete</div>
<div class="abs" style="left:203px;top:473px;width:1627px;height:1px;background:#e5e7eb"></div>
</body></html>
